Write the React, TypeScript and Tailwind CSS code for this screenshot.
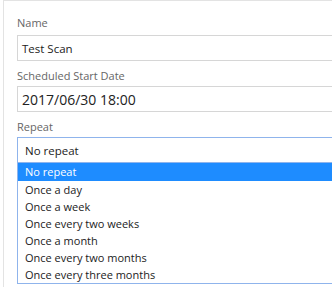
import React from "react";

const options = [
  "No repeat",
  "Once a day",
  "Once a week",
  "Once every two weeks",
  "Once a month",
  "Once every two months",
  "Once every three months",
];

export default function App() {
  return (
    <div
      className="w-[332px] h-[287px] overflow-hidden bg-white"
      style={{ fontFamily: '"Open Sans", "Noto Sans", sans-serif' }}
    >
      <div className="ml-[3px] h-full w-[400px] border-l border-t border-[#e3e3e3] pl-[13px] pt-[14px]">
        <div className="text-[11px] leading-[16px] text-[#666]">Name</div>
        <div className="mt-[4px] flex h-[26px] w-[400px] items-center border border-[#d6d6d6] pl-[4px] pt-px text-[11.5px] text-[#222]">
          Test Scan
        </div>
        <div className="mt-[7px] text-[11px] leading-[16px] text-[#666]">Scheduled Start Date</div>
        <div className="mt-[2px] flex h-[26px] w-[400px] items-center border border-[#d6d6d6] pl-[4px] pt-px text-[14px] text-[#222]">
          2017/06/30 18:00
        </div>
        <div className="mt-[7px] text-[11px] leading-[16px] text-[#666]">Repeat</div>
        <div className="mt-[2px] flex h-[26px] w-[400px] items-center border border-[#8fb4ec] pl-[7px] pt-px text-[11.5px] text-[#222]">
          No repeat
        </div>
        <div className="w-[400px] border border-t-0 border-[#8fb4ec]">
          {options.map((o, i) => (
            <div
              key={o}
              className={
                i === 0
                  ? "flex h-[18px] items-center bg-[#1e8cff] pl-[7px] pt-px text-[11px] text-white"
                  : "flex h-[17px] items-center pl-[7px] pt-px text-[11px] text-[#222]"
              }
            >
              {o}
            </div>
          ))}
        </div>
      </div>
    </div>
  );
}
